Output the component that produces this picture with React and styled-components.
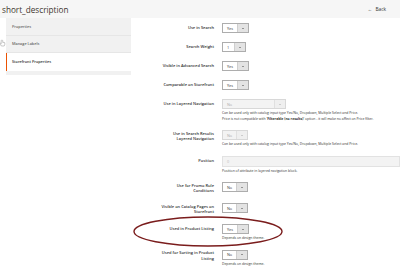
import React from 'react';
import styled, { createGlobalStyle } from 'styled-components';

const GlobalStyle = createGlobalStyle`
  body {
    margin: 0;
    font-family: 'Open Sans', 'Liberation Sans', sans-serif;
    background: #fff;
  }
`;

const Page = styled.div`
  position: relative;
  width: 400px;
  height: 271px;
  overflow: hidden;
  background: #fff;
`;

const Header = styled.div`
  height: 18px;
  display: flex;
  align-items: center;
  justify-content: space-between;
  padding: 0 14px 0 2px;
  background: #f6f6f6;
`;

const Title = styled.h1`
  margin: 0;
  font-size: 8.2px;
  font-weight: 400;
  color: #41362f;
`;

const BackLink = styled.span`
  font-size: 4.8px;
  color: #333;
  display: flex;
  align-items: center;
  gap: 3px;
`;

const Main = styled.div`
  display: flex;
  align-items: flex-start;
`;

const Sidebar = styled.ul`
  list-style: none;
  margin: 0 0 0 6px;
  padding: 0 0 4px;
  width: 125px;
  flex-shrink: 0;
  background: #f1f1f1;
`;

const Tab = styled.li`
  height: 17.5px;
  display: flex;
  align-items: center;
  padding-left: ${p => (p.$active ? '5px' : '6px')};
  font-size: 3.8px;
  font-weight: 600;
  color: ${p => (p.$active ? '#303030' : '#666')};
  background: ${p => (p.$active ? '#fff' : 'transparent')};
  border-left: ${p => (p.$active ? '1px solid #eb5202' : 'none')};
  border-bottom: ${p => (p.$active ? 'none' : '1px solid #e6e6e6')};
  box-sizing: border-box;
`;

const Form = styled.div`
  flex: 1;
  padding-top: 5px;
`;

const Field = styled.div`
  display: grid;
  grid-template-columns: 83px 1fr;
  column-gap: 8px;
  margin-bottom: 9px;
`;

const Label = styled.label`
  text-align: right;
  font-size: 4px;
  font-weight: 600;
  color: #303030;
  line-height: ${p => (p.$multi ? '5.75px' : '6px')};
  padding-top: ${p => (p.$multi ? '0.5px' : '2px')};
`;

const Control = styled.div`
  display: flex;
  flex-direction: column;
  align-items: flex-start;
`;

const Select = styled.div`
  width: ${p => p.$width}px;
  height: 10px;
  box-sizing: border-box;
  display: flex;
  border: 0.5px solid ${p => (p.$disabled ? '#d8d8d8' : '#adadad')};
  background: ${p => (p.$disabled ? '#f3f3f3' : '#fff')};
`;

const SelectValue = styled.span`
  flex: 1;
  padding-left: 4px;
  display: flex;
  align-items: center;
  font-size: 3.8px;
  color: ${p => (p.$disabled ? '#aaa' : '#333')};
`;

const Arrow = styled.span`
  width: 10.5px;
  display: flex;
  align-items: center;
  justify-content: center;
  background: ${p => (p.$disabled ? '#efefef' : '#e3e3e3')};
  border-left: 0.5px solid ${p => (p.$disabled ? '#e0e0e0' : '#cfcfcf')};

  &::after {
    content: '';
    border-left: 1.1px solid transparent;
    border-right: 1.1px solid transparent;
    border-top: 1.3px solid ${p => (p.$disabled ? '#aaa' : '#444')};
  }
`;

const Input = styled.div`
  width: 100%;
  height: 11px;
  box-sizing: border-box;
  padding-left: 4px;
  display: flex;
  align-items: center;
  font-size: 3.8px;
  color: #bbb;
  background: #f3f3f3;
  border: 0.5px solid #e2e2e2;
`;

const Note = styled.div`
  margin-top: 1px;
  font-size: 3.4px;
  line-height: 5.5px;
  color: #303030;
  white-space: nowrap;

  b {
    font-weight: 700;
  }
`;

const Overlay = styled.svg`
  position: absolute;
  left: 0;
  top: 0;
  pointer-events: none;
`;

const SelectBox = ({ value, width = 26, disabled }) => (
  <Select $width={width} $disabled={disabled}>
    <SelectValue $disabled={disabled}>{value}</SelectValue>
    <Arrow $disabled={disabled} />
  </Select>
);

const App = () => (
  <Page>
    <GlobalStyle />
    <Header>
      <Title>short_description</Title>
      <BackLink>
        <span>←</span>
        <span>Back</span>
      </BackLink>
    </Header>
    <Main>
      <Sidebar>
        <Tab>Properties</Tab>
        <Tab>Manage Labels</Tab>
        <Tab $active>Storefront Properties</Tab>
      </Sidebar>
      <Form>
        <Field>
          <Label>Use in Search</Label>
          <Control>
            <SelectBox value="Yes" width={27} />
          </Control>
        </Field>
        <Field>
          <Label>Search Weight</Label>
          <Control>
            <SelectBox value="1" width={24} />
          </Control>
        </Field>
        <Field>
          <Label>Visible in Advanced Search</Label>
          <Control>
            <SelectBox value="Yes" width={27} />
          </Control>
        </Field>
        <Field>
          <Label>Comparable on Storefront</Label>
          <Control>
            <SelectBox value="Yes" width={27} />
          </Control>
        </Field>
        <Field>
          <Label>Use in Layered Navigation</Label>
          <Control>
            <SelectBox value="No" width={64} disabled />
            <Note>
              Can be used only with catalog input type Yes/No, Dropdown, Multiple Select and Price.
              <br />
              Price is not compatible with '<b>Filterable (no results)</b>' option - it will make no affect on Price filter.
            </Note>
          </Control>
        </Field>
        <Field>
          <Label $multi>
            Use in Search Results
            <br />
            Layered Navigation
          </Label>
          <Control>
            <SelectBox value="No" width={26} disabled />
            <Note>Can be used only with catalog input type Yes/No, Dropdown, Multiple Select and Price.</Note>
          </Control>
        </Field>
        <Field>
          <Label>Position</Label>
          <Control>
            <Input>0</Input>
            <Note>Position of attribute in layered navigation block.</Note>
          </Control>
        </Field>
        <Field>
          <Label $multi>
            Use for Promo Rule
            <br />
            Conditions
          </Label>
          <Control>
            <SelectBox value="No" width={26} />
          </Control>
        </Field>
        <Field>
          <Label $multi>
            Visible on Catalog Pages on
            <br />
            Storefront
          </Label>
          <Control>
            <SelectBox value="No" width={26} />
          </Control>
        </Field>
        <Field>
          <Label>Used in Product Listing</Label>
          <Control>
            <SelectBox value="Yes" width={27} />
            <Note>Depends on design theme.</Note>
          </Control>
        </Field>
        <Field>
          <Label $multi>
            Used for Sorting in Product
            <br />
            Listing
          </Label>
          <Control>
            <SelectBox value="No" width={26} />
            <Note>Depends on design theme.</Note>
          </Control>
        </Field>
      </Form>
    </Main>
    <Overlay width="400" height="271" viewBox="0 0 400 271">
      <path
        d="M1.2 40.5 v3.4 l-0.8 -0.7 c-0.4 -0.3 -0.9 0.1 -0.6 0.5 l1.6 2.3 h2.8 l0.6 -1.6 v-1.6 c0 -0.4 -0.7 -0.4 -0.7 0 v-0.2 c0 -0.4 -0.7 -0.4 -0.7 0 v-0.2 c0 -0.4 -0.7 -0.4 -0.7 0 v-1.9 c0 -0.5 -1.5 -0.5 -1.5 0 z"
        fill="#fff"
        stroke="#777"
        strokeWidth="0.4"
      />
      <ellipse cx="208" cy="231.5" rx="74" ry="14.5" fill="none" stroke="#7a1c1c" strokeWidth="1.4" />
    </Overlay>
  </Page>
);

export default App;
